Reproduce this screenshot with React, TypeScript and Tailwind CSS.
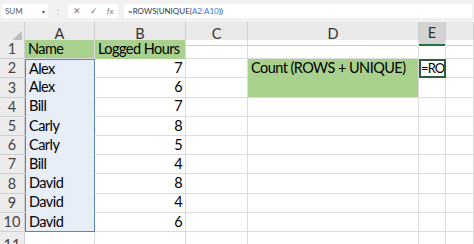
import React from 'react';

const font = { fontFamily: 'Lato, "Open Sans", sans-serif' };

const cols = ['A', 'B', 'C', 'D', 'E', ''];
const data: [string, string][] = [
  ['Alex', '7'],
  ['Alex', '6'],
  ['Bill', '7'],
  ['Carly', '8'],
  ['Carly', '5'],
  ['Bill', '4'],
  ['David', '8'],
  ['David', '4'],
  ['David', '6'],
];

const grid = 'grid grid-cols-[25px_70px_91px_62px_171px_27px_1fr]';
const cell = 'border-r border-b border-[#dcdcdc] h-[19.2px] px-[3px] flex items-center text-[14.5px] tracking-[-0.55px] text-black leading-none whitespace-nowrap overflow-visible';
const rowHead = 'border-r border-b border-[#cfcfcf] bg-[#ececec] flex items-center justify-center text-[14.5px] text-[#444] h-[19.2px]';

export default function App() {
  return (
    <div className="w-[474px] h-[244px] overflow-hidden bg-white" style={font}>
      {/* formula bar */}
      <div className="h-[22px] bg-[#f1f1f1] flex items-center gap-[6px] px-[2px] text-[8px] text-[#555]">
        <div className="w-[46px] h-[14px] bg-white flex items-center justify-between px-[3px]">
          <span>SUM</span>
          <span className="text-[6px]">▾</span>
        </div>
        <span className="text-[#bbb] text-[8px]">⋮</span>
        <div className="w-[50px] h-[14px] bg-white flex items-center justify-around text-[#777]">
          <span className="text-[9px]">✕</span>
          <span className="text-[9px]">✓</span>
          <span className="italic text-[8px]">fx</span>
        </div>
        <div className="flex-1 h-[14px] bg-white flex items-center px-[4px] text-[#333]">
          =ROWS(UNIQUE(<span className="text-[#3b6fd1]">A2:A10</span>))
        </div>
      </div>

      {/* column headers */}
      <div className={`${grid} h-[18px] bg-[#e9e9e9] text-[14.5px] text-[#333]`}>
        <div className="border-r border-b border-[#cfcfcf] flex items-end justify-end pr-[2px] pb-[2px]">
          <div className="w-0 h-0 border-l-[13px] border-l-transparent border-b-[12px] border-b-[#bdbdbd]" />
        </div>
        {cols.map((c, i) => (
          <div
            key={i}
            className={
              c === 'E'
                ? 'border-r border-[#cfcfcf] border-b-2 border-b-[#217346] bg-[#d3d3d3] flex items-center justify-center'
                : 'border-r border-b border-[#cfcfcf] flex items-center justify-center'
            }
          >
            {c}
          </div>
        ))}
      </div>

      {/* row 1 */}
      <div className={grid}>
        <div className={rowHead}>1</div>
        <div className={`${cell} bg-[#a9d18e] border-[#a9d18e]`}>Name</div>
        <div className={`${cell} bg-[#a9d18e] border-b-[#a9d18e] border-r-[#dcdcdc]`}>Logged Hours</div>
        <div className={cell} />
        <div className={cell} />
        <div className={`${cell} border-b-0`} />
        <div className={cell} />
      </div>

      {data.map(([name, hrs], i) => {
        const r = i + 2;
        const first = i === 0;
        const last = i === data.length - 1;
        return (
          <div key={r} className={grid}>
            <div className={`${rowHead} ${first ? 'bg-[#dadada]' : ''}`}>{r}</div>
            <div
              className={`h-[19.2px] px-[3px] flex items-center text-[14.5px] tracking-[-0.55px] leading-none bg-[#e8eef8] border-x border-[#5a82c8] ${
                first ? 'border-t' : ''
              } ${last ? 'border-b' : 'border-b border-b-[#e8eef8]'}`}
            >
              {name}
            </div>
            <div className={`${cell} justify-end`}>{hrs}</div>
            <div className={cell} />
            <div
              className={
                r === 2
                  ? `${cell} bg-[#a9d18e] border-b-[#a9d18e] border-r-[#dcdcdc]`
                  : r === 3
                  ? `${cell} bg-[#a9d18e]`
                  : cell
              }
            >
              {r === 2 ? 'Count (ROWS + UNIQUE)' : ''}
            </div>
            {r === 2 ? (
              <div className="h-[19.2px] border-2 border-[#2e5c3e] flex items-center text-[13px] tracking-[-0.9px] leading-none bg-white whitespace-nowrap overflow-hidden">
                =RO
              </div>
            ) : (
              <div className={cell} />
            )}
            <div className={cell} />
          </div>
        );
      })}

      {/* row 11 */}
      <div className={grid}>
        <div className={`${rowHead} items-start pt-[2px]`}>11</div>
        <div className={cell} />
        <div className={cell} />
        <div className={cell} />
        <div className={cell} />
        <div className={cell} />
        <div className={cell} />
      </div>
    </div>
  );
}
